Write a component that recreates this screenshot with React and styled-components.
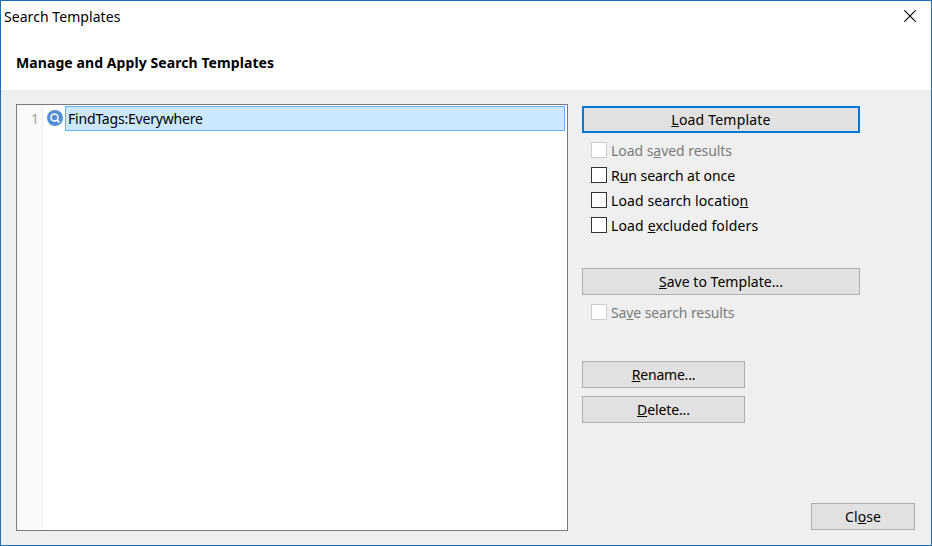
import React from "react";
import styled, { createGlobalStyle } from "styled-components";

const GlobalStyle = createGlobalStyle`
  *, *::before, *::after { box-sizing: border-box; }
  html, body { margin: 0; padding: 0; }
  body { font: 14px/20px "Noto Sans", "Open Sans", sans-serif; color: #000; overflow: hidden; }
`;

const Dialog = styled.div`
  width: 932px;
  height: 546px;
  display: flex;
  flex-direction: column;
  border: 1px solid #1a6fb5;
  background: #efefef;
`;

const TitleBar = styled.header`
  height: 31px;
  flex: none;
  display: flex;
  align-items: center;
  justify-content: space-between;
  padding: 0 15px 0 3px;
  background: #fff;
`;

const CloseIcon = styled.svg`
  display: block;
  width: 12px;
  height: 12px;
  margin-bottom: 1px;
`;

const Heading = styled.h1`
  height: 58px;
  flex: none;
  margin: 0;
  padding: 21px 15px 0;
  background: #fff;
  font-size: 14px;
  line-height: 20px;
  font-weight: 700;
`;

const Text = styled.span`
  white-space: pre;
  letter-spacing: ${(p) => p.$spacing || 0}px;
`;

const Key = styled.span`
  text-decoration: underline;
  text-decoration-thickness: 1px;
  text-underline-offset: 1px;
  text-decoration-skip-ink: none;
`;

const Body = styled.main`
  flex: 1;
  display: flex;
  padding: 14px 16px 14px 15px;
`;

const List = styled.div`
  width: 552px;
  height: 427px;
  display: flex;
  border: 1px solid #7a7a7a;
  background: #fff;
`;

const Gutter = styled.div`
  width: 26px;
  height: 424px;
  padding: 4px 3px 0 0;
  border-right: 1px solid #eee;
  background: #fafafa;
  color: #a0a0a0;
  text-align: right;
`;

const Row = styled.div`
  flex: 1;
  height: 25px;
  display: flex;
  align-items: center;
  margin: 1px 2px 0 4px;
`;

const SearchIcon = styled.svg`
  display: block;
  flex: none;
  width: 16px;
  height: 16px;
  margin: 0 2px 1px 0;
`;

const Selected = styled.div`
  flex: 1;
  height: 25px;
  padding: 2px 2px 0;
  border: 1px solid #5eb3f5;
  background: #cce8ff;
`;

const Side = styled.div`
  flex: 1;
  display: flex;
  flex-direction: column;
  padding: 2px 0 0 14px;
`;

const Button = styled.button`
  width: ${(p) => p.$width}px;
  height: 27px;
  flex: none;
  margin: 0;
  padding: 0;
  border: ${(p) => (p.$primary ? "2px solid #0078d7" : "1px solid #adadad")};
  background: #e1e1e1;
  color: #000;
  font: inherit;
`;

const Options = styled.div`
  display: flex;
  flex-direction: column;
  height: ${(p) => p.$height}px;
  padding: 5px 0 0 9px;
`;

const Option = styled.label`
  height: 25px;
  display: flex;
  align-items: center;
  gap: 4px;
  color: ${(p) => (p.$disabled ? "#7b7b7b" : "#000")};
`;

const Box = styled.span`
  width: 16px;
  height: 16px;
  flex: none;
  margin-bottom: 1px;
  border: 1px solid ${(p) => (p.$disabled ? "#ccc" : "#333")};
  background: #fff;
`;

const Actions = styled.div`
  display: flex;
  flex-direction: column;
  gap: 8px;
`;

const Footer = styled.footer`
  display: flex;
  justify-content: flex-end;
  margin-top: auto;
  padding-bottom: 1px;
`;

/* A caption whose access key is the character after "&". */
function Caption({ text, spacing }) {
  const at = text.indexOf("&");
  return (
    <Text $spacing={spacing}>
      {text.slice(0, at)}
      <Key>{text[at + 1]}</Key>
      {text.slice(at + 2)}
    </Text>
  );
}

function CheckOption({ text, disabled, spacing }) {
  return (
    <Option $disabled={disabled}>
      <Box $disabled={disabled} />
      <Caption text={text} spacing={spacing} />
    </Option>
  );
}

export default function App() {
  return (
    <>
      <GlobalStyle />
      <Dialog>
        <TitleBar>
          <Text $spacing={0.06}>Search Templates</Text>
          <CloseIcon viewBox="0 0 12 12">
            <path d="M.3.3l11.4 11.4M11.7.3L.3 11.7" stroke="#000" strokeWidth="1.1" />
          </CloseIcon>
        </TitleBar>
        <Heading>
          <Text $spacing={0.08}>Manage and Apply Search Templates</Text>
        </Heading>
        <Body>
          <List>
            <Gutter>1</Gutter>
            <Row>
              <SearchIcon viewBox="0 0 16 16">
                <circle cx="8" cy="8" r="8" fill="#558fd3" />
                <circle cx="7.5" cy="7.4" r="3.5" fill="none" stroke="#fff" strokeWidth="1.5" />
                <path d="M10 10l2.3 2.3" stroke="#fff" strokeWidth="1.8" />
              </SearchIcon>
              <Selected>
                <Text $spacing={-0.19}>FindTags:Everywhere</Text>
              </Selected>
            </Row>
          </List>
          <Side>
            <Button $width={278} $primary>
              <Caption text="&Load Template" spacing={0.2} />
            </Button>
            <Options $height={135}>
              <CheckOption text="Load s&aved results" spacing={-0.05} disabled />
              <CheckOption text="R&un search at once" spacing={-0.05} />
              <CheckOption text="Load search locatio&n" spacing={0.1} />
              <CheckOption text="Load &excluded folders" spacing={0.14} />
            </Options>
            <Button $width={278}>
              <Caption text="&Save to Template..." spacing={0.04} />
            </Button>
            <Options $height={66}>
              <CheckOption text="Sa&ve search results" spacing={-0.1} disabled />
            </Options>
            <Actions>
              <Button $width={163}>
                <Caption text="&Rename..." spacing={-0.2} />
              </Button>
              <Button $width={163}>
                <Caption text="&Delete..." spacing={-0.12} />
              </Button>
            </Actions>
            <Footer>
              <Button $width={104}>
                <Caption text="Cl&ose" spacing={0.1} />
              </Button>
            </Footer>
          </Side>
        </Body>
      </Dialog>
    </>
  );
}
